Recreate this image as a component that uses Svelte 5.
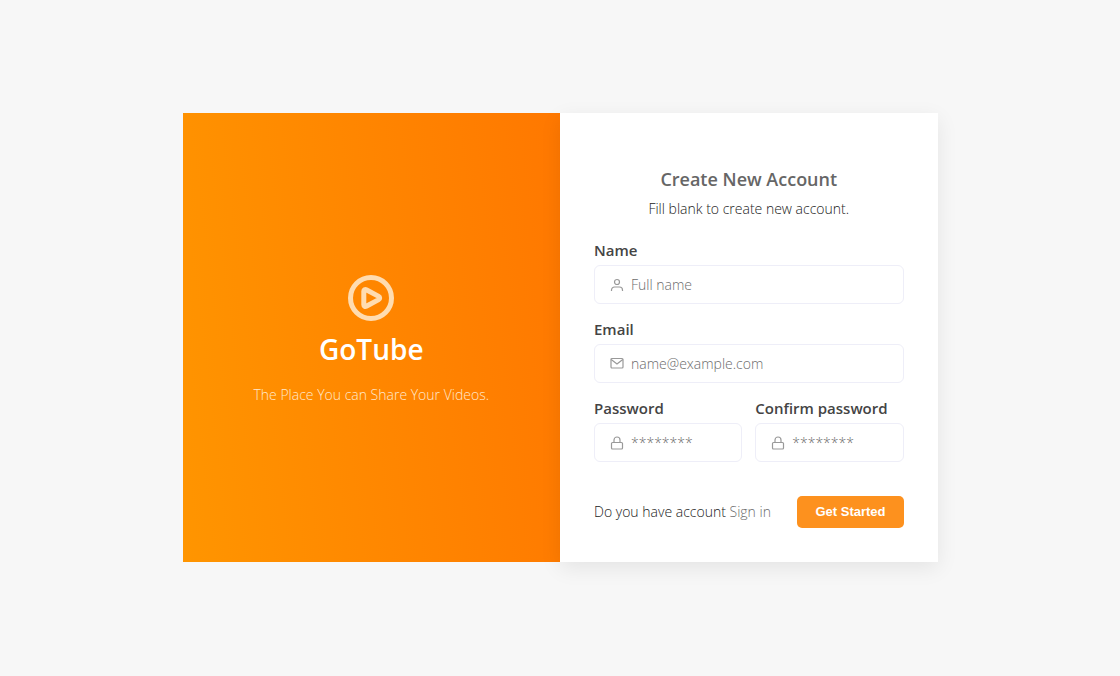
<script>
  let name = $state('');
  let email = $state('');
  let password = $state('');
  let confirmation = $state('');
</script>

{#snippet lock()}
  <svg class="icon" viewBox="0 0 16 16" aria-hidden="true">
    <rect x="2.500" y="7.500" width="11" height="6.500" rx="1" />
    <path d="M5 7.500V5a3 3 0 0 1 6 0v2.500" />
  </svg>
{/snippet}

<main>
  <div class="card">
    <section class="brand">
      <svg class="logo" viewBox="0 0 46 46" aria-hidden="true">
        <circle cx="23" cy="23" r="20.500" />
        <path d="M15.800 16.200v13.600c0 1.300 1.400 2.100 2.500 1.400l12.400-6.600c1.300-.7 1.300-2.500 0-3.200l-12.400-6.600c-1.100-.7-2.500.1-2.500 1.400z" />
      </svg>
      <h1>GoTube</h1>
      <p>The Place You can Share Your Videos.</p>
    </section>

    <form class="signup" onsubmit={(e) => e.preventDefault()}>
      <header>
        <h2>Create New Account</h2>
        <p>Fill blank to create new account.</p>
      </header>

      <div class="field">
        <label for="name">Name</label>
        <div class="control">
          <svg class="icon" viewBox="0 0 16 16" aria-hidden="true">
            <circle cx="8" cy="5" r="2.500" />
            <path d="M2.500 14v-1a3 3 0 0 1 3-3h5a3 3 0 0 1 3 3v1" />
          </svg>
          <input id="name" type="text" placeholder="Full name" bind:value={name} />
        </div>
      </div>

      <div class="field">
        <label for="email">Email</label>
        <div class="control">
          <svg class="icon" viewBox="0 0 16 16" aria-hidden="true">
            <rect x="2" y="2.500" width="12" height="9.500" rx="1" />
            <path d="M2.200 3.500L8 8l5.800-4.500" />
          </svg>
          <input id="email" type="email" placeholder="name@example.com" bind:value={email} />
        </div>
      </div>

      <div class="pair">
        <div class="field">
          <label for="password">Password</label>
          <div class="control">
            {@render lock()}
            <input id="password" type="password" placeholder="********" bind:value={password} />
          </div>
        </div>
        <div class="field">
          <label for="confirmation">Confirm password</label>
          <div class="control">
            {@render lock()}
            <input id="confirmation" type="password" placeholder="********" bind:value={confirmation} />
          </div>
        </div>
      </div>

      <footer>
        <p>Do you have account <a href="#signin">Sign in</a></p>
        <button type="submit">Get Started</button>
      </footer>
    </form>
  </div>
</main>

<style>
  :global(body) {
    margin: 0;
    background: #f7f7f7;
  }

  main {
    box-sizing: border-box;
    min-height: 100vh;
    padding-bottom: 1px;
    display: flex;
    align-items: center;
    justify-content: center;
    font: 300 14px/20px "Open Sans", sans-serif;
    color: #222;
  }

  .card {
    display: grid;
    grid-template-columns: repeat(2, minmax(0, 1fr));
    width: 100%;
    max-width: 755px;
  }

  .brand {
    display: flex;
    flex-direction: column;
    align-items: center;
    justify-content: center;
    padding-top: 4px;
    background: linear-gradient(83deg, #ff9500, #ff7800);
    color: #fff;
    text-align: center;
  }

  .logo {
    width: 46px;
    height: 46px;
    fill: none;
    stroke: #ffdcb0;
    stroke-width: 5;
    stroke-linejoin: round;
  }

  h1 {
    margin: 8px 0 16px;
    font-size: 28px;
    line-height: 40px;
    font-weight: 600;
  }

  p {
    margin: 0;
  }

  .brand p {
    color: #ffe8cc;
  }

  .signup {
    padding: 54px 34px 34px;
    background: #fff;
    box-shadow: 0 6px 20px rgba(0, 0, 0, 0.08);
  }

  header {
    margin-bottom: 21px;
    text-align: center;
  }

  h2 {
    margin: 0 0 8px;
    font-size: 18px;
    line-height: 24px;
    font-weight: 600;
    color: #666;
  }

  .field {
    margin-bottom: 15px;
  }

  label {
    display: block;
    margin-bottom: 5px;
    font-size: 15px;
    line-height: 20px;
    font-weight: 600;
    color: #444;
  }

  .control {
    display: flex;
    align-items: center;
    gap: 6px;
    padding: 8px 14px;
    border: 1px solid #eeeef8;
    border-radius: 6px;
  }

  .control:focus-within {
    border-color: #fd911e;
  }

  .icon {
    flex: none;
    width: 16px;
    height: 16px;
    fill: none;
    stroke: #999;
    stroke-width: 1.200;
  }

  input {
    flex: 1;
    min-width: 0;
    height: 21px;
    padding: 0;
    border: 0;
    outline: 0;
    background: none;
    font: inherit;
    color: #333;
  }

  input::placeholder {
    color: #6c6c6c;
    opacity: 1;
  }

  .pair {
    display: grid;
    grid-template-columns: repeat(2, minmax(0, 1fr));
    gap: 13px;
  }

  footer {
    display: flex;
    align-items: center;
    justify-content: space-between;
    margin-top: 19px;
  }

  a {
    color: #6c6c6c;
    text-decoration: none;
  }

  button {
    padding: 6px 18px;
    border: 0;
    border-radius: 5px;
    background: #fd911e;
    color: #fff;
    font: 700 13px/20px "Liberation Sans", Arial, sans-serif;
    cursor: pointer;
  }
</style>
